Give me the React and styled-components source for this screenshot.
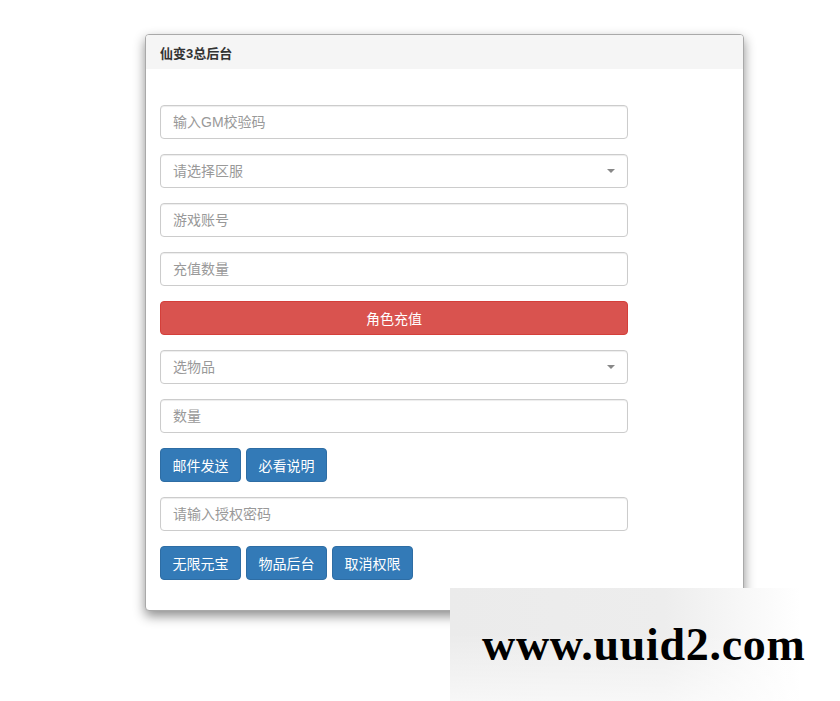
import React from 'react';
import styled, { createGlobalStyle } from 'styled-components';

const GlobalStyle = createGlobalStyle`
  html, body {
    margin: 0;
    padding: 0;
    background: #fff;
  }
  body {
    font-family: "Liberation Sans", "Noto Sans CJK SC", sans-serif;
    font-size: 14px;
    color: #333;
  }
  * {
    box-sizing: border-box;
  }
`;

const Page = styled.div`
  position: relative;
  width: 840px;
  height: 701px;
  overflow: hidden;
  padding: 34px 0 0 145px;
`;

// Panel with header strip, like a bootstrap panel
const Panel = styled.div`
  width: 599px;
  background: #fff;
  border: 1px solid #a9a9a9;
  border-radius: 4px;
  box-shadow: 0 5px 12px rgba(0, 0, 0, 0.45);
`;

const PanelHeader = styled.div`
  height: 34px;
  padding: 0 14px;
  display: flex;
  align-items: center;
  background: #f5f5f5;
  border-radius: 3px 3px 0 0;
`;

const PanelTitle = styled.h3`
  margin: 0;
  font-size: 13px;
  font-weight: 700;
  color: #333;
`;

const PanelBody = styled.div`
  padding: 36px 14px 15px;
`;

const Field = styled.div`
  position: relative;
  width: 468px;
  margin-bottom: 15px;
`;

const Input = styled.input`
  display: block;
  width: 100%;
  height: 34px;
  padding: 6px 12px;
  font-family: inherit;
  font-size: 14px;
  color: #555;
  background: #fff;
  border: 1px solid #ccc;
  border-radius: 4px;
  box-shadow: inset 0 1px 1px rgba(0, 0, 0, 0.075);
  outline: none;
  &::placeholder {
    color: #999;
  }
`;

const Select = styled.select`
  display: block;
  width: 100%;
  height: 34px;
  padding: 6px 12px;
  font-family: inherit;
  font-size: 14px;
  color: #999;
  background: #fff;
  border: 1px solid #ccc;
  border-radius: 4px;
  box-shadow: inset 0 1px 1px rgba(0, 0, 0, 0.075);
  appearance: none;
  outline: none;
`;

const Caret = styled.span`
  position: absolute;
  right: 13px;
  top: 15px;
  width: 0;
  height: 0;
  border-left: 4px solid transparent;
  border-right: 4px solid transparent;
  border-top: 4px solid #888;
  pointer-events: none;
`;

const BlockButton = styled.button`
  display: block;
  width: 100%;
  height: 34px;
  font-family: inherit;
  font-size: 14px;
  color: #fff;
  background: #d9534f;
  border: 1px solid #d43f3a;
  border-radius: 4px;
  cursor: pointer;
`;

const ButtonRow = styled.div`
  display: flex;
  gap: 5px;
  margin-bottom: 15px;
`;

const Button = styled.button`
  width: 81px;
  height: 34px;
  padding: 0;
  font-family: inherit;
  font-size: 14px;
  color: #fff;
  background: #337ab7;
  border: 1px solid #2e6da4;
  border-radius: 4px;
  cursor: pointer;
`;

// site watermark pasted over the lower right corner
const Watermark = styled.div`
  position: absolute;
  left: 450px;
  top: 588px;
  width: 390px;
  height: 113px;
  display: flex;
  align-items: center;
  padding: 0 0 0 32px;
  background:
    linear-gradient(to bottom, rgba(255, 255, 255, 0) 40%, rgba(255, 255, 255, 0.6) 100%),
    linear-gradient(to right, #ebebeb 0%, #ededed 55%, #fff 90%);
`;

const WatermarkText = styled.span`
  font-family: "Liberation Serif", "DejaVu Serif", serif;
  font-weight: 700;
  font-size: 46px;
  letter-spacing: 0.7px;
  color: #000;
`;

export default function App() {
  return (
    <Page>
      <GlobalStyle />
      <Panel>
        <PanelHeader>
          <PanelTitle>仙变3总后台</PanelTitle>
        </PanelHeader>
        <PanelBody>
          <Field>
            <Input placeholder="输入GM校验码" />
          </Field>
          <Field>
            <Select defaultValue="">
              <option value="" disabled>请选择区服</option>
            </Select>
            <Caret />
          </Field>
          <Field>
            <Input placeholder="游戏账号" />
          </Field>
          <Field>
            <Input placeholder="充值数量" />
          </Field>
          <Field>
            <BlockButton>角色充值</BlockButton>
          </Field>
          <Field>
            <Select defaultValue="">
              <option value="" disabled>选物品</option>
            </Select>
            <Caret />
          </Field>
          <Field>
            <Input placeholder="数量" />
          </Field>
          <ButtonRow>
            <Button>邮件发送</Button>
            <Button>必看说明</Button>
          </ButtonRow>
          <Field>
            <Input placeholder="请输入授权密码" />
          </Field>
          <ButtonRow>
            <Button>无限元宝</Button>
            <Button>物品后台</Button>
            <Button>取消权限</Button>
          </ButtonRow>
        </PanelBody>
      </Panel>
      <Watermark>
        <WatermarkText>www.uuid2.com</WatermarkText>
      </Watermark>
    </Page>
  );
}
